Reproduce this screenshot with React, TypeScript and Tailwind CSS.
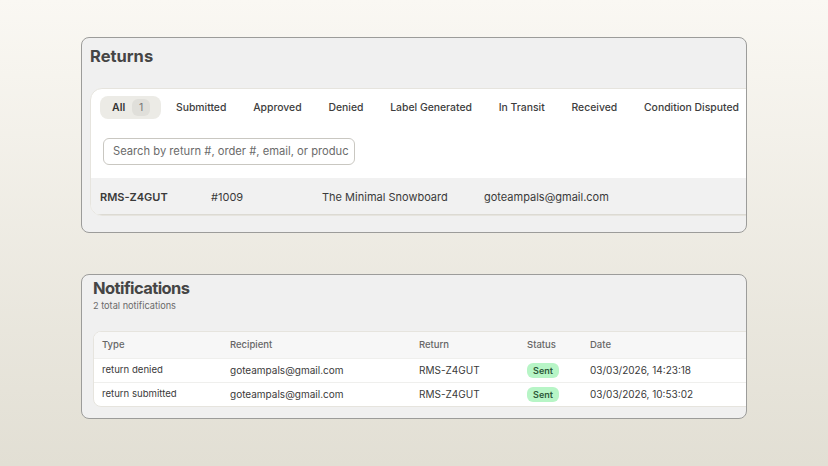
const tabs = [
  "Submitted",
  "Approved",
  "Denied",
  "Label Generated",
  "In Transit",
  "Received",
  "Condition Disputed",
];

const notifications = [
  { type: "return denied", recipient: "goteampals@gmail.com", ret: "RMS-Z4GUT", date: "03/03/2026, 14:23:18" },
  { type: "return submitted", recipient: "goteampals@gmail.com", ret: "RMS-Z4GUT", date: "03/03/2026, 10:53:02" },
];

function ReturnsCard() {
  return (
    <div className="h-[196px] overflow-hidden rounded-lg border border-[#9c9c9a] bg-[#f0f0f0] pl-[8px] pt-[6px]">
      <h1 className="text-[16.5px] font-bold leading-[24px] text-[#454545]">Returns</h1>
      <div className="mt-[20px] w-[700px] overflow-hidden rounded-l-xl border border-[#e6e4de] bg-white">
        <div className="flex items-center gap-[2.8px] pl-[9px] pt-[7px]">
          <div className="flex h-[23px] items-center gap-[7px] rounded-lg bg-[#ecebe6] pl-3 pr-[11px]">
            <span className="text-[10.5px] font-semibold text-[#333]">All</span>
            <span className="flex h-[17px] w-[18px] items-center justify-center rounded-md bg-[#e0dfda] text-[10.5px] text-[#777]">
              1
            </span>
          </div>
          {tabs.map((t) => (
            <div key={t} className="flex h-[23px] items-center px-3 text-[10.4px] font-medium text-[#3d3d3d]">
              {t}
            </div>
          ))}
        </div>
        <div className="pl-[12px] pt-[19px]">
          <div className="flex h-[27px] w-[252px] items-center overflow-hidden rounded-md border border-[#c9c7c1] pl-[9px]">
            <span className="whitespace-nowrap text-[11.2px] text-[#6b6b6b]">
              Search by return #, order #, email, or produc
            </span>
          </div>
        </div>
        <div className="mt-[13px] flex h-[37px] items-center border-b border-[#dcdad3] bg-[#f1f1f1] pl-[9px] pt-[3px] text-[11px] text-[#3a3a3a]">
          <span className="w-[111px] font-semibold">RMS-Z4GUT</span>
          <span className="w-[111px]">#1009</span>
          <span className="w-[162px]">The Minimal Snowboard</span>
          <span>goteampals@gmail.com</span>
        </div>
      </div>
    </div>
  );
}

function NotificationsCard() {
  return (
    <div className="mt-[41px] h-[145px] overflow-hidden rounded-lg border border-[#9c9c9a] bg-[#f0f0f0] pl-[11px] pt-[1px]">
      <h2 className="text-[16.5px] font-bold leading-[24px] tracking-[-0.035em] text-[#454545]">Notifications</h2>
      <p className="text-[9.2px] leading-[12px] text-[#6a6a6a]">2 total notifications</p>
      <div className="mt-[19px] w-[700px] overflow-hidden rounded-l-lg border border-[#e6e4de] bg-white">
        <div className="flex h-[26px] items-center bg-[#f7f7f7] pl-[8px] text-[9.5px] font-medium text-[#666]">
          <span className="w-[128px]">Type</span>
          <span className="w-[189px]">Recipient</span>
          <span className="w-[108px]">Return</span>
          <span className="w-[63px]">Status</span>
          <span>Date</span>
        </div>
        {notifications.map((n) => (
          <div
            key={n.type}
            className="flex h-[24px] items-center border-t border-[#efefed] pl-[8px] text-[9.6px] text-[#3a3a3a]"
          >
            <span className="w-[128px]">{n.type}</span>
            <span className="w-[189px] text-[10px]">{n.recipient}</span>
            <span className="w-[108px] text-[10px]">{n.ret}</span>
            <span className="w-[63px]">
              <span className="inline-flex h-[15px] w-[32px] items-center justify-center rounded-md bg-[#b7f5c6] text-[9px] font-semibold text-[#2f5a3a]">
                Sent
              </span>
            </span>
            <span className="text-[10px]">{n.date}</span>
          </div>
        ))}
      </div>
    </div>
  );
}

export default function App() {
  return (
    <div
      className="h-[466px] w-[828px] bg-gradient-to-b from-[#faf8f3] to-[#e2dfd4] px-[81px] pt-[37px]"
      style={{ fontFamily: "Inter, 'Noto Sans', sans-serif" }}
    >
      <ReturnsCard />
      <NotificationsCard />
    </div>
  );
}
